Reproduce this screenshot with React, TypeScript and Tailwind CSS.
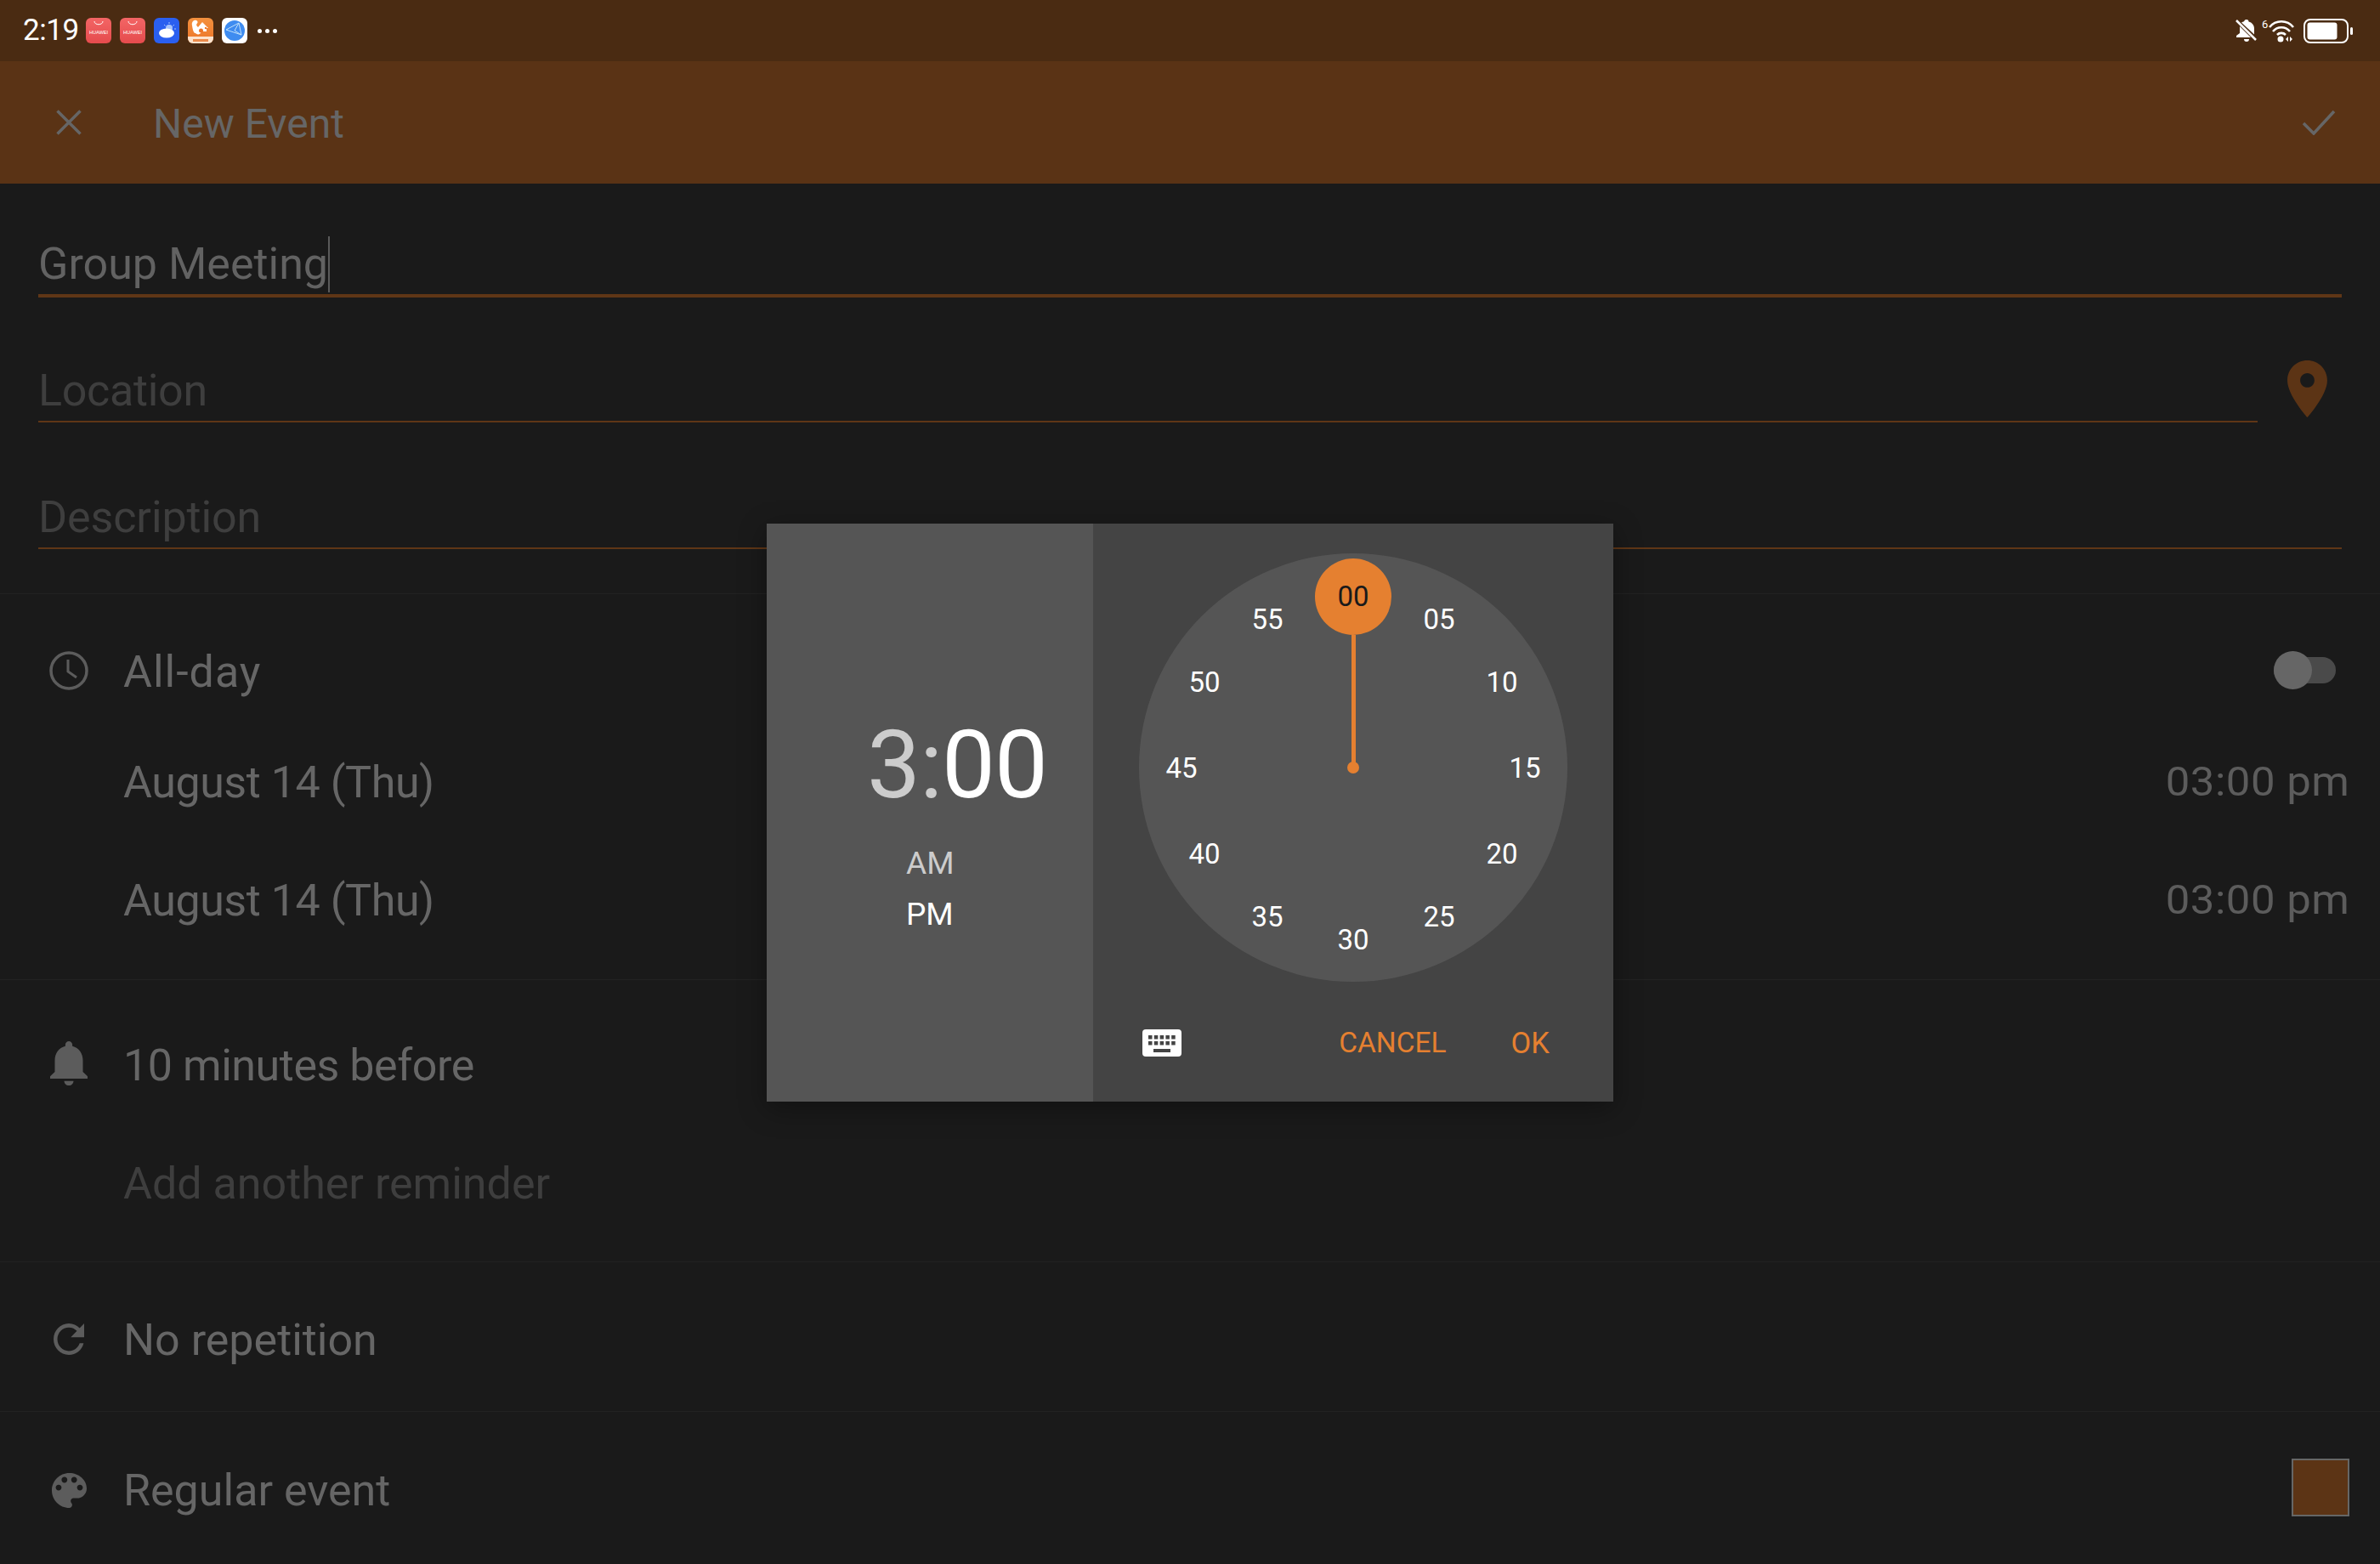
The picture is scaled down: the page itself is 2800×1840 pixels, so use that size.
const FONT = "font-['Roboto',sans-serif]";

function Huawei() {
  return (
    <div className="w-[30px] h-[30px] rounded-[6px] bg-gradient-to-b from-[#f36565] to-[#e54b4d] flex flex-col items-center pt-[4px]">
      <svg width="12" height="5" viewBox="0 0 12 5"><path d="M1 0c0 5 10 5 10 0" fill="none" stroke="#fff" strokeWidth="1" /></svg>
      <span className="text-white text-[5.6px] leading-[7px] mt-[5px] font-['Liberation_Sans',sans-serif]">HUAWEI</span>
    </div>
  );
}

function StatusBar() {
  return (
    <div className="h-[72px] bg-[#4a2b12] flex items-center justify-between pl-[27px] pr-[32px]">
      <div className="flex items-center">
        <span className={`${FONT} text-white text-[35px] leading-[40px] w-[74px] tracking-[-0.4px]`}>2:19</span>
        <div className="flex items-center gap-[10px]">
          <Huawei />
          <Huawei />
          <div className="w-[30px] h-[30px] rounded-[6px] bg-[#2a5ff0]">
            <svg width="30" height="30" viewBox="0 0 30 30">
              <circle cx="18" cy="12" r="4" fill="#a9c4fa" />
              <path d="M18 5v2M24 8l-1.500 1.500M26 13h-2M12 8l1.500 1.500" stroke="#a9c4fa" strokeWidth="1" />
              <ellipse cx="15" cy="18" rx="9" ry="5.500" fill="#fff" />
            </svg>
          </div>
          <div className="w-[30px] h-[30px] rounded-[6px] overflow-hidden bg-gradient-to-b from-[#f4913e] to-[#ec7427] flex flex-col">
            <svg width="30" height="22" viewBox="0 0 30 22" className="shrink-0">
              <path d="M5 9c-1-4 2-7 5-6 2 .7 2 3 .5 4-1 1 0 3 1.500 4l5-6 7 7h-2v4h-6a4 4 0 0 1-7 2H8C6 16 5.500 12 5 9z" fill="#fff" />
              <circle cx="15.500" cy="15" r="2.500" fill="#ec7427" />
              <circle cx="21" cy="12" r="1.200" fill="#ec7427" />
            </svg>
            <div className="flex-1 bg-[#fde3cd] flex items-center justify-center">
              <div className="w-[18px] h-[3px] bg-[#ec8a4a]" />
            </div>
          </div>
          <div className="w-[30px] h-[30px] rounded-[6px] bg-white flex items-center justify-center">
            <svg width="26" height="26" viewBox="0 0 26 26">
              <circle cx="13" cy="13" r="12" fill="#3f8cf0" />
              <path d="M3 12l15-8 3 14-18-6zM18 4l-5 9 8 5" fill="none" stroke="#bfe0fb" strokeWidth="1" />
            </svg>
          </div>
        </div>
        <div className="flex gap-[4px] ml-[12px]">
          <span className="w-[5px] h-[5px] rounded-full bg-white" />
          <span className="w-[5px] h-[5px] rounded-full bg-white" />
          <span className="w-[5px] h-[5px] rounded-full bg-white" />
        </div>
      </div>
      <div className="flex items-center">
        <svg width="26" height="28" viewBox="0 0 26 28" className="mr-[7px] translate-x-[2px]">
          <path d="M13 1a2.500 2.500 0 0 1 2.500 2.500c4 1 6.500 4 6.500 8v7L7 4.500c1-.7 2-1 3-1.200A3 3 0 0 1 13 1zM5 9l13 13H1v-2l4-3V9z" fill="#fff" />
          <path d="M10 24h6a3 3 0 0 1-6 0z" fill="#fff" />
          <path d="M1 2l23 23" stroke="#fff" strokeWidth="2.500" />
        </svg>
        <svg width="40" height="30" viewBox="0 0 40 30" className="mr-[9px]">
          <text x="0" y="12" fill="#fff" fontSize="13" fontFamily="Roboto">6</text>
          <path d="M9 11a18 18 0 0 1 28 0M13 16a13 13 0 0 1 20 0M18 20a7 7 0 0 1 10 0" fill="none" stroke="#fff" strokeWidth="2.600" />
          <circle cx="22" cy="25" r="3.500" fill="#fff" />
          <path d="M31 22v6l-3-3zM33 22v6l3-3z" fill="#fff" />
        </svg>
        <svg width="58" height="30" viewBox="0 0 58 30">
          <rect x="1" y="2" width="51" height="27" rx="7" fill="none" stroke="#fff" strokeWidth="2" />
          <rect x="4.500" y="5.500" width="35" height="20" rx="3" fill="#fff" />
          <rect x="55" y="11" width="3" height="9" rx="1.500" fill="#fff" />
        </svg>
      </div>
    </div>
  );
}

function Toolbar() {
  return (
    <div className="h-[144px] bg-[#5a3315] flex items-center justify-between pl-[66px] pr-[52px]">
      <div className="flex items-center">
        <svg width="30" height="30" viewBox="0 0 30 30" className="mr-[84px]">
          <path d="M1.500 1.500l27 27M28.500 1.500l-27 27" stroke="#666" strokeWidth="3.500" />
        </svg>
        <span className={`${FONT} text-[#666] text-[48px] leading-[54px] pt-[4px]`}>New Event</span>
      </div>
      <svg width="40" height="30" viewBox="0 0 40 30">
        <path d="M2 16l12 12L38 2" fill="none" stroke="#666" strokeWidth="3.500" />
      </svg>
    </div>
  );
}

function Field({ text, placeholder, cursor, h, line = "border-b-2", pad = "pt-[6px]", tracking = "", children }: { text: string; placeholder?: boolean; cursor?: boolean; h: string; line?: string; pad?: string; tracking?: string; children?: React.ReactNode }) {
  return (
    <div className={`flex items-end pl-[45px] pr-[45px] ${h}`}>
      <div className={`flex-1 border-[#5f3616] flex items-center h-[78px] ${pad} ${line}`}>
        <span className={`${FONT} text-[52px] leading-[60px] ${tracking} ${placeholder ? "text-[#3e3e3e]" : "text-[#626262]"}`}>{text}</span>
        {cursor && <span className="w-[2px] h-[66px] bg-[#5a5a5a]" />}
      </div>
      {children}
    </div>
  );
}

function Row({ icon, text, right, dim, h, tracking = "", lift = "pt-[5px]" }: { icon?: React.ReactNode; text: string; right?: React.ReactNode; dim?: boolean; h: string; tracking?: string; lift?: string }) {
  return (
    <div className={`flex items-center pl-[45px] pr-[36px] ${h}`}>
      <div className="w-[72px] mr-[28px] flex items-center justify-center">{icon}</div>
      <span className={`${FONT} flex-1 text-[52px] leading-[60px] ${lift} ${tracking} ${dim ? "text-[#3e3e3e]" : "text-[#666]"}`}>{text}</span>
      {right}
    </div>
  );
}

const Time = () => (
  <span className="font-['Roboto',sans-serif] text-[#5c5c5c] text-[48px] leading-[60px] pt-[4px] tracking-[0.5px] scale-x-[1.06] origin-right">03:00 pm</span>
);

const MINUTES = ["00", "05", "10", "15", "20", "25", "30", "35", "40", "45", "50", "55"];

function Clock() {
  return (
    <div className="relative w-[504px] h-[504px] rounded-full bg-[#555555]">
      <div className="absolute left-[207px] top-[6px] w-[90px] h-[90px] rounded-full bg-[#e58030]" />
      <div className="absolute left-[250px] top-[96px] w-[5px] h-[156px] bg-[#e58030]" />
      <div className="absolute left-[245px] top-[245px] w-[14px] h-[14px] rounded-full bg-[#e58030]" />
      {MINUTES.map((m, i) => {
        const a = (i * 30 * Math.PI) / 180;
        const x = 252 + 202 * Math.sin(a);
        const y = 253 - 202 * Math.cos(a);
        return (
          <span
            key={m}
            className={`${FONT} absolute w-[60px] h-[40px] -ml-[30px] -mt-[20px] flex items-center justify-center text-[33px] ${i === 0 ? "text-[#1a1a1a]" : "text-white"}`}
            style={{ left: x, top: y }}
          >
            {m}
          </span>
        );
      })}
    </div>
  );
}

function Dialog() {
  return (
    <div className="absolute left-[902px] top-[616px] w-[996px] h-[680px] flex shadow-[0_8px_30px_rgba(0,0,0,0.35)]">
      <div className="w-[384px] bg-[#555555] flex flex-col pl-[118px] pt-[219px]">
        <div className={`${FONT} text-[112px] leading-[130px] h-[130px] tracking-[-1px]`}>
          <span className="text-[#cccccc]">3:</span>
          <span className="text-white">00</span>
        </div>
        <div className={`${FONT} pl-[46px] mt-[21px] text-[37px] leading-[60px]`}>
          <div className="text-[#cccccc]">AM</div>
          <div className="text-white">PM</div>
        </div>
      </div>
      <div className="flex-1 bg-[#444444] flex flex-col items-center">
        <div className="pt-[35px]">
          <Clock />
        </div>
        <div className="w-full flex items-center pl-[58px] pr-[75px] mt-[52px] h-[40px]">
          <svg width="46" height="32" viewBox="0 0 46 32">
            <rect width="46" height="32" rx="4" fill="#fff" />
            {[0, 1, 2, 3, 4].map((c) => (
              <g key={c} fill="#444">
                <rect x={7 + c * 6.800} y="7" width="4.500" height="4.500" />
                <rect x={7 + c * 6.800} y="14" width="4.500" height="4.500" />
              </g>
            ))}
            <rect x="13" y="23" width="20" height="4" fill="#444" />
          </svg>
          <span className={`${FONT} text-[#e58030] text-[33.5px] leading-[40px] ml-auto mr-[76px]`}>CANCEL</span>
          <span className={`${FONT} text-[#e58030] text-[34.5px] leading-[40px]`}>OK</span>
        </div>
      </div>
    </div>
  );
}

export default function App() {
  return (
    <div className="relative w-[2800px] h-[1840px] bg-[#1a1a1a] overflow-hidden">
      <StatusBar />
      <Toolbar />
      <Field text="Group Meeting" cursor h="h-[134px]" line="border-b-4" pad="pt-[4px]" />
      <Field text="Location" placeholder h="h-[147px]" tracking="tracking-[-0.3px]">
        <div className="w-[99px] flex justify-end pr-[17px] self-start pt-[74px]">
          <svg width="47" height="67" viewBox="5 2 14 20">
            <path fill="#5c3415" d="M12 2C8.130 2 5 5.130 5 9c0 5.250 7 13 7 13s7-7.750 7-13c0-3.870-3.130-7-7-7zm0 9.500c-1.380 0-2.500-1.120-2.500-2.500s1.120-2.500 2.500-2.500 2.500 1.120 2.500 2.500-1.120 2.500-2.500 2.500z" />
          </svg>
        </div>
      </Field>
      <Field text="Description" placeholder h="h-[149px]" tracking="tracking-[-0.1px]" />
      <div className="h-[53px] border-b border-[#222222]" />
      <div className="h-[454px] border-b border-[#222222] pt-[24px]">
        <Row
          h="h-[131px]"
          tracking="tracking-[1px]"
          icon={
            <svg width="46" height="46" viewBox="0 0 46 46">
              <circle cx="23" cy="23" r="21" fill="none" stroke="#5c5c5c" strokeWidth="3.500" />
              <path d="M22 10v14l10 7" fill="none" stroke="#5c5c5c" strokeWidth="3" />
            </svg>
          }
          text="All-day"
          right={
            <div className="relative w-[73px] h-[45px] mr-[16px] flex items-center">
              <div className="w-full h-[31px] rounded-full bg-[#4a4a4a]" />
              <div className="absolute left-0 top-0 w-[45px] h-[45px] rounded-full bg-[#666666]" />
            </div>
          }
        />
        <Row h="h-[128px]" tracking="tracking-[-0.45px]" text="August 14 (Thu)" right={<Time />} />
        <Row h="h-[150px]" tracking="tracking-[-0.45px]" text="August 14 (Thu)" right={<Time />} />
      </div>
      <div className="h-[332px] border-b border-[#222222]">
        <div className="h-[196px] flex flex-col justify-center">
          <Row
            h="h-[80px]"
            tracking="tracking-[-0.45px]"
            icon={
              <svg width="44" height="52" viewBox="4 2.500 16 19.500" preserveAspectRatio="none">
                <path fill="#5c5c5c" d="M12 22c1.100 0 2-.900 2-2h-4c0 1.100.890 2 2 2zm6-6v-5c0-3.070-1.640-5.640-4.500-6.320V4c0-.830-.670-1.500-1.500-1.500s-1.500.670-1.500 1.500v.680C7.630 5.360 6 7.920 6 11v5l-2 2v1h16v-1l-2-2z" />
              </svg>
            }
            text="10 minutes before"
          />
        </div>
        <Row h="h-[82px]" dim text="Add another reminder" />
      </div>
      <div className="h-[176px] border-b border-[#222222] flex flex-col justify-center pt-[6px]">
        <Row
          h="h-[80px]"
          lift="pt-[2px]"
          icon={
            <svg width="36" height="37" viewBox="4 4 16 16" preserveAspectRatio="none">
              <path fill="#5c5c5c" d="M17.650 6.350C16.200 4.900 14.210 4 12 4c-4.420 0-7.990 3.580-7.990 8s3.570 8 7.990 8c3.730 0 6.840-2.550 7.730-6h-2.080c-.820 2.330-3.040 4-5.650 4-3.310 0-6-2.690-6-6s2.690-6 6-6c1.660 0 3.140.690 4.220 1.780L13 11h7V4l-2.350 2.350z" />
            </svg>
          }
          text="No repetition"
        />
      </div>
      <div className="h-[178px] flex flex-col justify-center pt-[6px]">
        <Row
          h="h-[80px]"
          lift="pt-[2px]"
          icon={
            <svg width="41" height="41" viewBox="3 3 18 18">
              <path fill="#5c5c5c" d="M12 3c-4.970 0-9 4.030-9 9s4.030 9 9 9c.830 0 1.500-.670 1.500-1.500 0-.390-.150-.740-.390-1.010-.230-.260-.380-.610-.380-.990 0-.830.670-1.500 1.500-1.500H16c2.760 0 5-2.240 5-5 0-4.420-4.030-8-9-8zm-5.500 9c-.830 0-1.500-.670-1.500-1.500S5.670 9 6.500 9 8 9.670 8 10.500 7.330 12 6.500 12zm3-4C8.670 8 8 7.330 8 6.500S8.670 5 9.500 5s1.500.670 1.500 1.500S10.330 8 9.500 8zm5 0c-.830 0-1.500-.670-1.500-1.500S13.670 5 14.500 5s1.500.670 1.500 1.500S15.330 8 14.500 8zm3 4c-.830 0-1.500-.670-1.500-1.500S16.670 9 17.500 9s1.500.670 1.500 1.500-.670 1.500-1.500 1.500z" />
            </svg>
          }
          text="Regular event"
          right={<div className="w-[68px] h-[68px] -mt-[6px] border-2 border-[#666666] bg-[#5c3415]" />}
        />
      </div>
      <Dialog />
    </div>
  );
}
